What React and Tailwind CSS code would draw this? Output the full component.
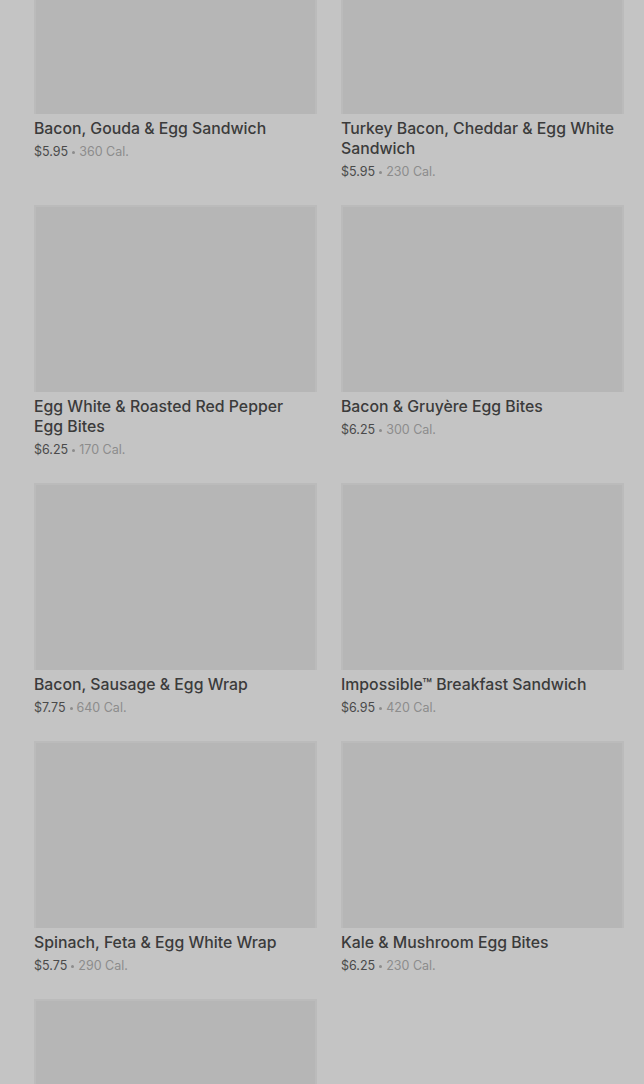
import React from 'react';

const items = [
  { name: 'Bacon, Gouda & Egg Sandwich', price: '$5.95', cal: '360 Cal.' },
  { name: 'Turkey Bacon, Cheddar & Egg White Sandwich', price: '$5.95', cal: '230 Cal.' },
  { name: 'Egg White & Roasted Red Pepper Egg Bites', price: '$6.25', cal: '170 Cal.' },
  { name: 'Bacon & Gruyère Egg Bites', price: '$6.25', cal: '300 Cal.' },
  { name: 'Bacon, Sausage & Egg Wrap', price: '$7.75', cal: '640 Cal.' },
  { name: 'Impossible™ Breakfast Sandwich', price: '$6.95', cal: '420 Cal.' },
  { name: 'Spinach, Feta & Egg White Wrap', price: '$5.75', cal: '290 Cal.' },
  { name: 'Kale & Mushroom Egg Bites', price: '$6.25', cal: '230 Cal.' },
  { name: null },
];

const MenuCard = ({ item }) => (
  <div className="flex flex-col">
    {/* Image placeholder */}
    <div className="h-[187px] w-full bg-[#b6b6b6] border-2 border-[#bbbbbb] border-b-0" />
    {item.name && (
      <div className="mt-[5px] pr-[4px]">
        <p className="text-[15.8px] leading-[20px] font-medium text-[#3b3b3b]">{item.name}</p>
        <p className="mt-[3px] text-[12.5px] leading-[20px] text-[#8c8c8c] flex items-center">
          <span className="text-[#4a4a4a]">{item.price}</span>
          <span className="inline-block w-[3px] h-[3px] rounded-full bg-[#8c8c8c] mx-[4px]" />
          <span>{item.cal}</span>
        </p>
      </div>
    )}
  </div>
);

export default function App() {
  return (
    <div
      className="w-[644px] h-[1084px] overflow-hidden bg-[#c4c4c4]"
      style={{ fontFamily: 'Inter, "Noto Sans", sans-serif' }}
    >
      <div className="-mt-[73px] pl-[34px] pr-[20px] grid grid-cols-2 gap-x-[24px] gap-y-[23px]">
        {items.map((item, i) => (
          <MenuCard key={i} item={item} />
        ))}
      </div>
    </div>
  );
}
